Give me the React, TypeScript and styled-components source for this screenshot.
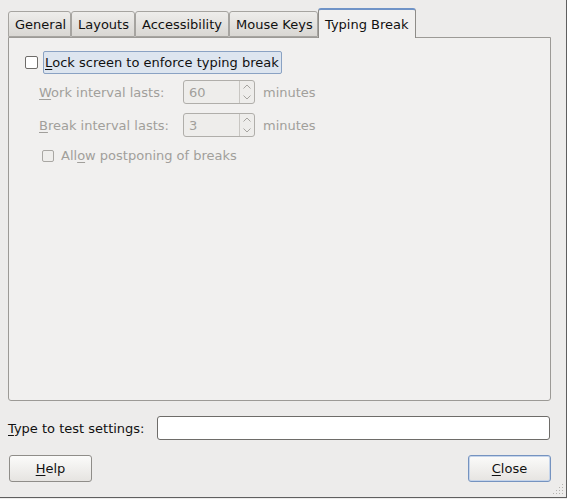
import React from "react";
import styled, { createGlobalStyle } from "styled-components";

const Global = createGlobalStyle`
  html, body { margin: 0; padding: 0; background: #edeceb; }
  body { font-family: "DejaVu Sans", sans-serif; font-size: 13px; color: #1a1a1a; }
`;

const Window = styled.div`
  width: 543px;
  height: 489px;
  border-right: 1px solid #5f5f5f;
  border-bottom: 1px solid #5f5f5f;
  background: #edeceb;
  position: relative;
  display: flex;
  flex-direction: column;
  padding: 8px 15px 0 8px;
`;

const Notebook = styled.div`
  display: flex;
  flex-direction: column;
  width: 543px;
`;

const TabBar = styled.div`
  display: flex;
  align-items: flex-end;
  height: 29px;
  position: relative;
  z-index: 1;
`;

const Tab = styled.div<{ $active?: boolean; $w: number }>`
  width: ${(p) => p.$w}px;
  box-sizing: border-box;
  height: ${(p) => (p.$active ? 30 : 26)}px;
  margin-bottom: ${(p) => (p.$active ? -1 : 0)}px;
  border: 1px solid ${(p) => (p.$active ? "#8e8c88" : "#a6a4a0")};
  border-bottom: ${(p) => (p.$active ? "none" : "1px solid #a6a4a0")};
  border-top: ${(p) => (p.$active ? "2px solid #6f93c7" : "1px solid #a6a4a0")};
  border-radius: 3px 3px 0 0;
  background: ${(p) =>
    p.$active ? "#f1f0ef" : "linear-gradient(#eeedeb, #d9d7d3)"};
  display: flex;
  align-items: center;
  padding-left: 6px;
  padding-top: ${(p) => (p.$active ? 0 : 1)}px;
  white-space: nowrap;
  color: #111;
`;

const Panel = styled.div`
  height: 364px;
  box-sizing: border-box;
  border: 1px solid #9c9a96;
  border-radius: 0 0 3px 3px;
  background: #f1f0ef;
  padding: 12px 0 0 16px;
  display: flex;
  flex-direction: column;
`;

const CheckRow = styled.div`
  display: flex;
  align-items: center;
  gap: 5px;
  height: 24px;
`;

const Checkbox = styled.span<{ $size: number; $disabled?: boolean }>`
  width: ${(p) => p.$size}px;
  height: ${(p) => p.$size}px;
  box-sizing: border-box;
  border: 1px solid ${(p) => (p.$disabled ? "#a9a7a3" : "#6e6c69")};
  border-radius: 2px;
  background: ${(p) => (p.$disabled ? "#efeeec" : "#ffffff")};
  flex: none;
`;

const FocusLabel = styled.span`
  border: 1px solid #8aa2c3;
  border-radius: 2px;
  background: #dde5ef;
  padding: 2px 2px 2px 1px;
  height: 23px;
  box-sizing: border-box;
  display: flex;
  align-items: center;
  color: #111;
`;

const U = styled.span`
  text-decoration: underline;
  text-underline-offset: 2px;
`;

const Indent = styled.div`
  display: flex;
  flex-direction: column;
  padding-left: 14px;
  margin-top: 6px;
`;

const FieldRow = styled.div`
  display: grid;
  grid-template-columns: 136px 72px auto;
  align-items: center;
  column-gap: 8px;
  height: 24px;
  margin-bottom: 9px;
  color: #a19f9b;
`;

const Spin = styled.div`
  display: flex;
  height: 24px;
  box-sizing: border-box;
  border: 1px solid #b0aeaa;
  border-radius: 3px;
  background: #eeedeb;
  overflow: hidden;
`;

const SpinValue = styled.span`
  flex: 1;
  padding-left: 5px;
  display: flex;
  align-items: center;
  color: #a19f9b;
`;

const SpinButtons = styled.div`
  width: 14px;
  border-left: 1px solid #c8c6c2;
  display: flex;
  flex-direction: column;
`;

const SpinBtn = styled.div`
  flex: 1;
  display: flex;
  align-items: center;
  justify-content: center;
`;

const SmallCheckRow = styled.div`
  display: flex;
  align-items: center;
  gap: 7px;
  padding-left: 3px;
  margin-top: 2px;
  color: #a19f9b;
`;

const Footer = styled.div`
  display: flex;
  flex-direction: column;
  width: 543px;
`;

const TestRow = styled.div`
  display: flex;
  align-items: center;
  margin-top: 15px;
  height: 24px;
`;

const TestLabel = styled.span`
  width: 149px;
  flex: none;
  color: #111;
`;

const Entry = styled.div`
  flex: 1;
  height: 24px;
  box-sizing: border-box;
  border: 1px solid #6e6c69;
  border-radius: 3px;
  background: #fff;
  margin-right: 1px;
`;

const ButtonRow = styled.div`
  display: flex;
  justify-content: space-between;
  margin-top: 15px;
  padding: 0 0 0 1px;
`;

const Button = styled.div<{ $default?: boolean }>`
  width: 83px;
  height: 27px;
  box-sizing: border-box;
  border: 1px solid ${(p) => (p.$default ? "#7593c0" : "#8f8d89")};
  border-radius: 3px;
  background: linear-gradient(#fbfbfa, #e6e4e1);
  box-shadow: ${(p) => (p.$default ? "inset 0 0 0 1px #c5d4ea" : "none")};
  display: flex;
  align-items: center;
  justify-content: center;
  color: #111;
`;

const Grip = styled.svg`
  position: absolute;
  right: 2px;
  bottom: 2px;
`;

const Arrow = ({ up }: { up?: boolean }) => (
  <svg width="8" height="5" viewBox="0 0 8 5">
    <path
      d={up ? "M0.5 4.5 L4 1 L7.5 4.5" : "M0.5 0.5 L4 4 L7.5 0.5"}
      fill="none"
      stroke="#a6a4a0"
      strokeWidth="1"
    />
  </svg>
);

const SpinBox = ({ value }: { value: string }) => (
  <Spin>
    <SpinValue>{value}</SpinValue>
    <SpinButtons>
      <SpinBtn>
        <Arrow up />
      </SpinBtn>
      <SpinBtn>
        <Arrow />
      </SpinBtn>
    </SpinButtons>
  </Spin>
);

const tabs = [
  { label: "General", w: 63 },
  { label: "Layouts", w: 64 },
  { label: "Accessibility", w: 94 },
  { label: "Mouse Keys", w: 89 },
  { label: "Typing Break", w: 98, active: true },
];

export default function App() {
  return (
    <>
      <Global />
      <Window>
        <Notebook>
          <TabBar>
            {tabs.map((t) => (
              <Tab key={t.label} $w={t.w} $active={t.active}>
                {t.label}
              </Tab>
            ))}
          </TabBar>
          <Panel>
            <CheckRow>
              <Checkbox $size={13} />
              <FocusLabel>
                <U>L</U>ock screen to enforce typing break
              </FocusLabel>
            </CheckRow>
            <Indent>
              <FieldRow>
                <span>
                  <U>W</U>ork interval lasts:
                </span>
                <SpinBox value="60" />
                <span>minutes</span>
              </FieldRow>
              <FieldRow>
                <span>
                  <U>B</U>reak interval lasts:
                </span>
                <SpinBox value="3" />
                <span>minutes</span>
              </FieldRow>
              <SmallCheckRow>
                <Checkbox $size={12} $disabled />
                <span>
                  All<U>o</U>w postponing of breaks
                </span>
              </SmallCheckRow>
            </Indent>
          </Panel>
        </Notebook>
        <Footer>
          <TestRow>
            <TestLabel>
              <U>T</U>ype to test settings:
            </TestLabel>
            <Entry />
          </TestRow>
          <ButtonRow>
            <Button>
              <U>H</U>elp
            </Button>
            <Button $default>
              <U>C</U>lose
            </Button>
          </ButtonRow>
        </Footer>
        <Grip width="11" height="11" viewBox="0 0 11 11">
          {[
            [9, 1],
            [9, 4],
            [6, 4],
            [9, 7],
            [6, 7],
            [3, 7],
            [9, 10],
            [6, 10],
            [3, 10],
            [0, 10],
          ].map(([x, y], i) => (
            <rect key={i} x={x} y={y - 1} width="1" height="1" fill="#b5b3af" />
          ))}
        </Grip>
      </Window>
    </>
  );
}
